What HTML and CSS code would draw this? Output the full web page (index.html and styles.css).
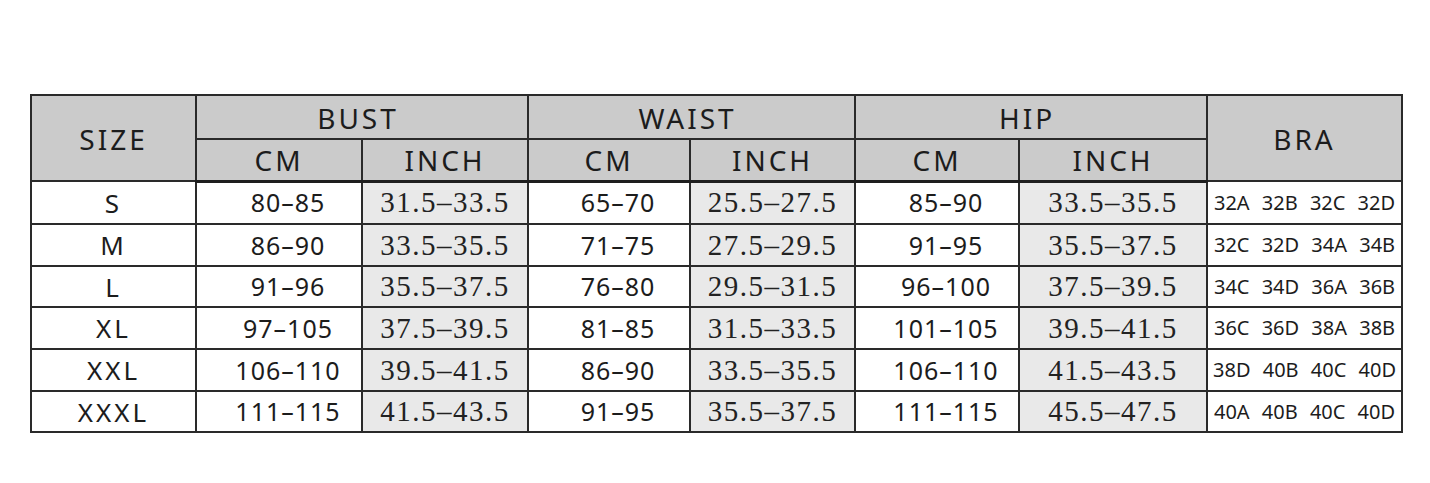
FILE: index.html
```html
<!DOCTYPE html>
<html lang="en">
<head>
<meta charset="utf-8">
<title>Size chart</title>
<link rel="stylesheet" href="styles.css">
</head>
<body>
<table class="chart">
  <colgroup>
    <col class="c-size">
    <col class="c-cm1">
    <col class="c-in1">
    <col class="c-cm2">
    <col class="c-in2">
    <col class="c-cm3">
    <col class="c-in3">
    <col class="c-bra">
  </colgroup>
  <thead>
    <tr class="h1">
      <th rowspan="2" class="hd">SIZE</th>
      <th colspan="2" class="hd grp">BUST</th>
      <th colspan="2" class="hd grp">WAIST</th>
      <th colspan="2" class="hd grp">HIP</th>
      <th rowspan="2" class="hd">BRA</th>
    </tr>
    <tr class="h2">
      <th class="hd">CM</th>
      <th class="hd">INCH</th>
      <th class="hd">CM</th>
      <th class="hd">INCH</th>
      <th class="hd">CM</th>
      <th class="hd">INCH</th>
    </tr>
  </thead>
  <tbody>
    <tr class="r-a">
      <td class="size">S</td>
      <td class="cm">80–85</td><td class="inch">31.5–33.5</td>
      <td class="cm">65–70</td><td class="inch">25.5–27.5</td>
      <td class="cm">85–90</td><td class="inch">33.5–35.5</td>
      <td class="bra">32A 32B 32C 32D</td>
    </tr>
    <tr class="r-b">
      <td class="size">M</td>
      <td class="cm">86–90</td><td class="inch">33.5–35.5</td>
      <td class="cm">71–75</td><td class="inch">27.5–29.5</td>
      <td class="cm">91–95</td><td class="inch">35.5–37.5</td>
      <td class="bra">32C 32D 34A 34B</td>
    </tr>
    <tr class="r-c">
      <td class="size">L</td>
      <td class="cm">91–96</td><td class="inch">35.5–37.5</td>
      <td class="cm">76–80</td><td class="inch">29.5–31.5</td>
      <td class="cm">96–100</td><td class="inch">37.5–39.5</td>
      <td class="bra">34C 34D 36A 36B</td>
    </tr>
    <tr class="r-b">
      <td class="size">XL</td>
      <td class="cm">97–105</td><td class="inch">37.5–39.5</td>
      <td class="cm">81–85</td><td class="inch">31.5–33.5</td>
      <td class="cm">101–105</td><td class="inch">39.5–41.5</td>
      <td class="bra">36C 36D 38A 38B</td>
    </tr>
    <tr class="r-b">
      <td class="size">XXL</td>
      <td class="cm">106–110</td><td class="inch">39.5–41.5</td>
      <td class="cm">86–90</td><td class="inch">33.5–35.5</td>
      <td class="cm">106–110</td><td class="inch">41.5–43.5</td>
      <td class="bra">38D 40B 40C 40D</td>
    </tr>
    <tr class="r-c">
      <td class="size">XXXL</td>
      <td class="cm">111–115</td><td class="inch">41.5–43.5</td>
      <td class="cm">91–95</td><td class="inch">35.5–37.5</td>
      <td class="cm">111–115</td><td class="inch">45.5–47.5</td>
      <td class="bra">40A 40B 40C 40D</td>
    </tr>
  </tbody>
</table>
</body>
</html>
```
FILE: styles.css
```css
html, body {
  margin: 0;
  padding: 0;
  background: #ffffff;
}

body {
  padding: 94px 0 0 30px;
  font-family: "Noto Sans", "Liberation Sans", sans-serif;
  color: #1c1c1c;
}

.chart {
  border-collapse: collapse;
  table-layout: fixed;
  width: 1371px;
  border: 2px solid #1e1e1e;
}

.c-size { width: 165px; }
.c-cm1 { width: 166px; }
.c-in1 { width: 166px; }
.c-cm2 { width: 162px; }
.c-in2 { width: 165px; }
.c-cm3 { width: 164px; }
.c-in3 { width: 188px; }
.c-bra { width: 195px; }

.chart th,
.chart td {
  border: 2px solid #2a2a2a;
  padding: 0;
  text-align: center;
  vertical-align: middle;
  white-space: nowrap;
  line-height: 1;
}

.h1 { height: 44px; }
.h2 { height: 42px; }
.h2 th { border-bottom: 3px solid #1e1e1e; }

.hd {
  background: #cbcbcb;
  font-weight: 400;
  font-size: 28px;
  letter-spacing: 3px;
  padding-left: 3px;
}

.h1 .hd { padding-top: 2px; }
.h1 .grp { padding-left: 0; padding-right: 8px; }

.r-a { height: 43px; }
.r-b { height: 42px; }
.r-c { height: 41px; }

.size {
  font-size: 26px;
  letter-spacing: 3px;
  padding-left: 3px;
}

.chart td.cm {
  font-size: 25px;
  letter-spacing: 1px;
  padding-left: 18px;
}

.inch {
  background: #e9e9e9;
  font-family: "Liberation Serif", "Times New Roman", serif;
  font-size: 29px;
  letter-spacing: 1.5px;
  color: #222222;
  padding-top: 3px;
  padding-left: 2px;
}

.bra {
  font-size: 20px;
  word-spacing: 7px;
}
```
